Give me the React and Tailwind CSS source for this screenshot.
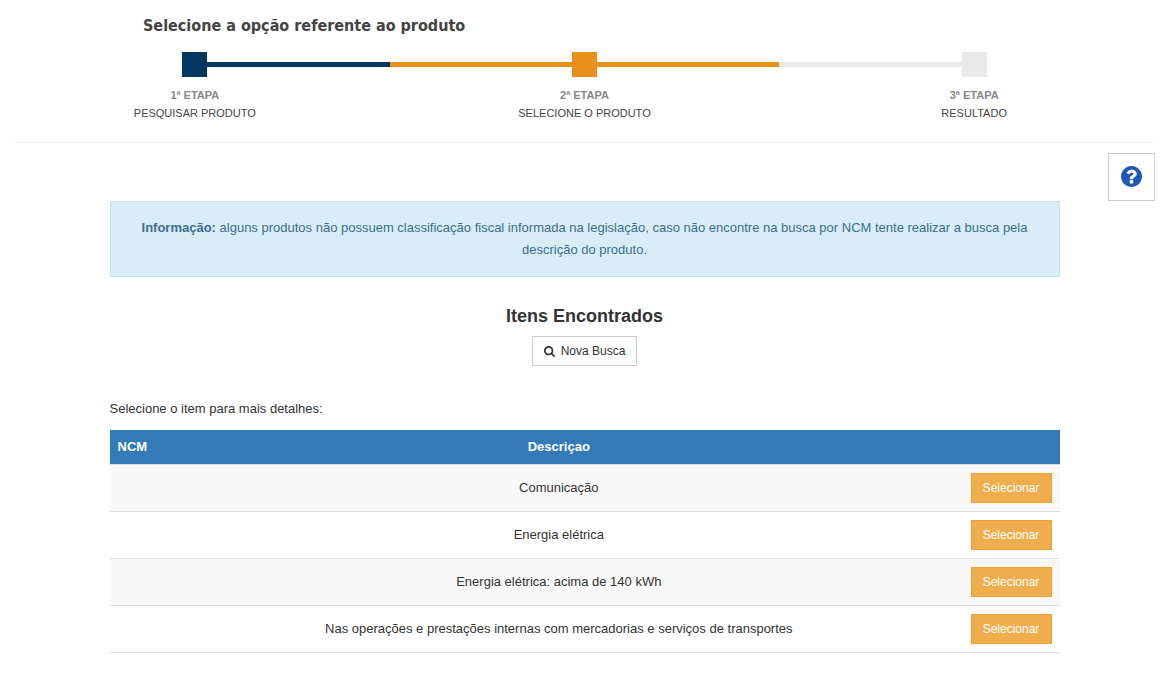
import React from "react";

const steps = [
  { order: "1ª ETAPA", name: "PESQUISAR PRODUTO", square: "bg-[#00365f]", left: "", right: "bg-[#00365f]" },
  { order: "2ª ETAPA", name: "SELECIONE O PRODUTO", square: "bg-[#e9901a]", left: "bg-[#e9901a]", right: "bg-[#e9901a]" },
  { order: "3ª ETAPA", name: "RESULTADO", square: "bg-[#e9e9e9]", left: "bg-[#e9e9e9]", right: "" },
];

const items = [
  "Comunicação",
  "Energia elétrica",
  "Energia elétrica: acima de 140 kWh",
  "Nas operações e prestações internas com mercadorias e serviços de transportes",
];

function QuestionIcon() {
  return (
    <svg viewBox="128 128 1536 1536" className="size-[21px]" fill="currentColor" aria-hidden="true">
      <path d="M1024 1376v-192q0-14-9-23t-23-9h-192q-14 0-23 9t-9 23v192q0 14 9 23t23 9h192q14 0 23-9t9-23zM1280 704q0-88-55.500-163T1086 425t-170-41q-243 0-371 213-15 24 8 42l132 100q7 6 19 6 16 0 25-12 53-68 86-92 34-24 86-24 48 0 85.500 26t37.500 59q0 38-20 61t-68 45q-63 28-115.500 86.500T768 1020v36q0 14 9 23t23 9h192q14 0 23-9t9-23q0-19 21.500-49.500T1100 957q32-18 49-28.500t46-35 44.500-48 28-60.500 12.500-81zM1664 896q0 209-103 385.500T1281.500 1561 896 1664t-385.500-103T231 1281.500 128 896t103-385.500T510.500 231 896 128t385.500 103T1561 510.500 1664 896z" />
    </svg>
  );
}

function SearchIcon() {
  return (
    <svg viewBox="64 128 1664 1664" className="size-[11px]" fill="currentColor" aria-hidden="true">
      <path d="M1216 832q0-185-131.500-316.500t-316.500-131.500-316.500 131.500-131.500 316.500 131.500 316.500 316.500 131.500 316.500-131.500 131.500-316.500zm512 832q0 52-38 90t-90 38q-54 0-90-38l-343-342q-179 124-399 124-143 0-273.500-55.500t-225-150-150-225-55.500-273.500 55.500-273.500 150-225 225-150 273.500-55.500 273.500 55.500 225 150 150 225 55.500 273.500q0 220-124 399l343 343q37 37 37 90z" />
    </svg>
  );
}

function Stepper() {
  return (
    <ol className="grid grid-cols-3">
      {steps.map((step) => (
        <li key={step.order} className="flex flex-col items-center">
          <div className="flex w-full items-center">
            <span className={`h-[5px] flex-1 ${step.left}`} />
            <span className={`size-[25px] ${step.square}`} />
            <span className={`h-[5px] flex-1 ${step.right}`} />
          </div>
          <span className="mt-[9px] text-[11px] leading-[18px] font-bold text-[#888]">{step.order}</span>
          <span className="text-[11px] leading-[18px] text-[#444]">{step.name}</span>
        </li>
      ))}
    </ol>
  );
}

export default function App() {
  return (
    <div className="min-h-screen bg-white pb-5 font-['Liberation_Sans',Arial,sans-serif] text-[13px] leading-[18px] text-[#333]">
      <header>
        <h1 className="pt-[14px] pb-[14px] pl-[143px] font-['DejaVu_Sans_Condensed','DejaVu_Sans',sans-serif] text-[16px] leading-6 font-bold text-[#444]">
          Selecione a opção referente ao produto
        </h1>
        <Stepper />
      </header>

      <hr className="mx-[14px] mt-5 border-[#eee]" />

      <div className="mt-[10px] flex justify-end pr-[14px]">
        <button
          type="button"
          aria-label="Ajuda"
          className="flex h-12 w-[47px] items-center justify-center border border-[#ccc] bg-white pb-px text-[#1c57b9]"
        >
          <QuestionIcon />
        </button>
      </div>

      <main className="mx-auto max-w-[950px]">
        <p className="border border-[#bce8f1] bg-[#d9edf7] p-[15px] text-center leading-[22px] text-[#3d6e8c]">
          <strong>Informação:</strong> alguns produtos não possuem classificação fiscal informada na legislação, caso não
          encontre na busca por NCM tente realizar a busca pela descrição do produto.
        </p>

        <div className="mt-7 flex flex-col items-center gap-2">
          <h2 className="text-[18px] leading-[23px] font-bold">Itens Encontrados</h2>
          <button
            type="button"
            className="flex h-[30px] items-center gap-[6px] border border-[#ccc] bg-white px-[11px] text-[12px]"
          >
            <SearchIcon />
            Nova Busca
          </button>
        </div>

        <p className="mt-[34px]">Selecione o item para mais detalhes:</p>

        <table className="mt-3 w-full border-separate border-spacing-0 border-b border-[#ddd]">
          <thead>
            <tr className="bg-[#337ab7] text-white">
              <th scope="col" className="w-[45px] p-2 text-left">NCM</th>
              <th scope="col" className="p-2 text-center">Descriçao</th>
              <th scope="col" className="w-[97px] p-2" />
            </tr>
          </thead>
          <tbody>
            {items.map((item) => (
              <tr key={item} className="odd:bg-[#f9f9f9]">
                <td className="border-t border-[#ddd] p-2" />
                <td className="border-t border-[#ddd] p-2 text-center">{item}</td>
                <td className="border-t border-[#ddd] p-2">
                  <button
                    type="button"
                    className="block h-[30px] w-full border border-[#eea236] bg-[#f0ad4e] text-[12px] text-white"
                  >
                    Selecionar
                  </button>
                </td>
              </tr>
            ))}
          </tbody>
        </table>
      </main>
    </div>
  );
}
